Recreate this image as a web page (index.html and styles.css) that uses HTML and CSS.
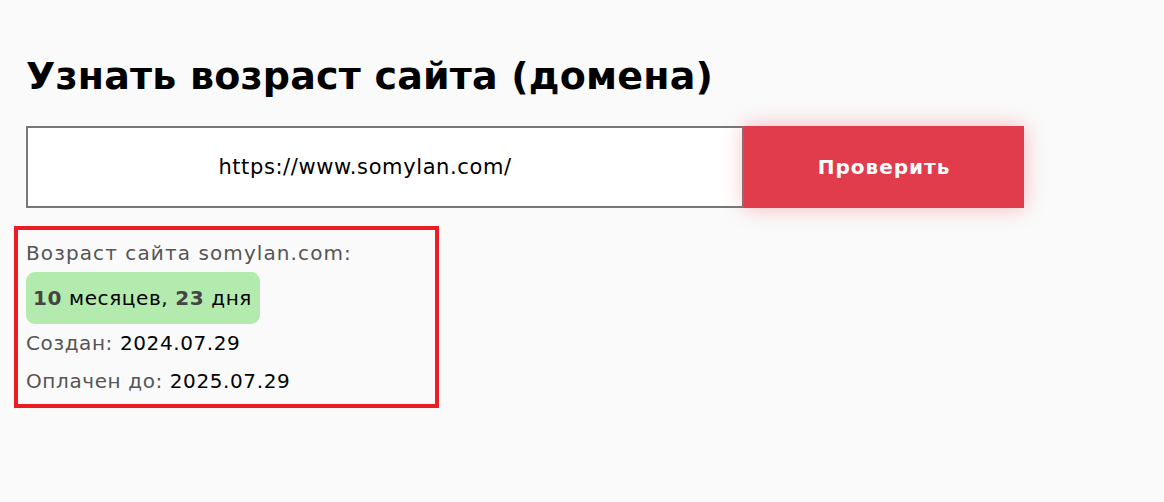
FILE: index.html
```html
<!DOCTYPE html>
<html lang="ru">
<head>
  <meta charset="UTF-8" />
  <meta name="viewport" content="width=device-width, initial-scale=1.0"/>
  <title>Узнать возраст сайта</title>
  <link rel="stylesheet" href="styles.css">
</head>
<body>

  <div class="container">
    <h1>Узнать возраст сайта (домена)</h1>

    <form class="check-form">
      <input type="text" class="url-input" value="https://www.somylan.com/" />
      <button type="button" class="check-btn">Проверить</button>
    </form>

    <div class="result">
      <p class="result-title">Возраст сайта somylan.com:</p>
      <div class="age"><b>10</b> месяцев, <b>23</b> дня</div>
      <p class="result-row">Создан: <span>2024.07.29</span></p>
      <p class="result-row">Оплачен до: <span>2025.07.29</span></p>
    </div>
  </div>

</body>
</html>
```

FILE: styles.css
```css
body {
  font-family: 'DejaVu Sans', 'Noto Sans', sans-serif;
  background-color: #fafafa;
  color: #000;
  margin: 0;
  padding: 0;
}

.container {
  padding: 50px 14px 0;
}

h1 {
  margin: 0 0 24px 12px;
  font-size: 38px;
  font-weight: 700;
  letter-spacing: 0.2px;
  line-height: 52px;
}

.check-form {
  display: flex;
  margin-left: 12px;
  margin-bottom: 18px;
}

.url-input {
  width: 718px;
  height: 82px;
  box-sizing: border-box;
  border: 2px solid #777;
  background: #fff;
  font-family: inherit;
  font-size: 21px;
  letter-spacing: 0.6px;
  color: #000;
  text-align: center;
  padding: 0 40px 0 0;
  outline: none;
}

.check-btn {
  width: 280px;
  height: 82px;
  border: none;
  background-color: #e03c4c;
  color: #fff;
  font-family: inherit;
  font-size: 20px;
  font-weight: 700;
  letter-spacing: 1px;
  box-shadow: 0 0 20px rgba(240, 60, 70, 0.35);
}

.result {
  display: inline-flex;
  flex-direction: column;
  align-items: flex-start;
  border: 4px solid #ec1c24;
  padding: 4px 8px;
  width: 425px;
  box-sizing: border-box;
}

.result p {
  margin: 0;
  font-size: 20px;
  letter-spacing: 0.6px;
  line-height: 38px;
  color: #555;
}

.result .result-title {
  letter-spacing: 1.1px;
}

.result-row span {
  color: #000;
}

.age {
  background-color: #b3eaae;
  border-radius: 9px;
  padding: 0 8px 0 7px;
  height: 52px;
  line-height: 52px;
  font-size: 20px;
  letter-spacing: 0.6px;
  color: #000;
}

.age b {
  color: #444;
}
```
